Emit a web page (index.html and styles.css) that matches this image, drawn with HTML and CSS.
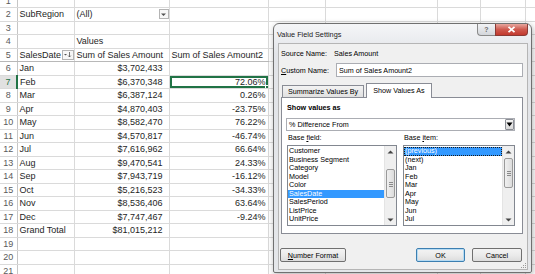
FILE: index.html
```html
<!DOCTYPE html>
<html lang="en">
<head>
    <meta charset="UTF-8">
    <title>Value Field Settings</title>
    <link rel="stylesheet" href="styles.css">
</head>
<body><div class="feuille">
    <table class="grille">
        <colgroup>
            <col class="c-num"><col class="c-a"><col class="c-b"><col class="c-c">
            <col class="c-d"><col class="c-e"><col class="c-f"><col class="c-g"><col class="c-h">
        </colgroup>
        <tr><td class="num">1</td><td></td><td></td><td></td><td></td><td></td><td></td><td></td><td></td></tr>
        <tr><td class="num">2</td><td>SubRegion</td>
            <td><div class="filtre-page"><span>(All)</span><span class="bouton-filtre"><svg width="7" height="7" viewBox="0 0 7 7"><path d="M1 2.5 L6 2.5 L3.5 5 Z" fill="#505050"/></svg></span></div></td>
            <td></td><td></td><td></td><td></td><td></td><td></td></tr>
        <tr><td class="num">3</td><td></td><td></td><td></td><td></td><td></td><td></td><td></td><td></td></tr>
        <tr><td class="num">4</td><td></td><td>Values</td><td></td><td></td><td></td><td></td><td></td><td></td></tr>
        <tr class="entete-pivot"><td class="num">5</td>
            <td><div class="filtre-page"><span>SalesDate</span><span class="bouton-tri"><svg width="9" height="7" viewBox="0 0 9 7"><path d="M1 3 L4 3 L2.5 4.6 Z" fill="#505050"/><path d="M6.5 1 L6.5 6 M5.2 4.6 L6.5 6 L7.8 4.6" stroke="#505050" stroke-width="0.8" fill="none"/></svg></span></div></td>
            <td>Sum of Sales Amount</td><td>Sum of Sales Amount2</td><td></td><td></td><td></td><td></td><td></td></tr>
        <tr><td class="num">6</td><td>Jan</td><td class="montant">$3,702,433</td><td class="pct"></td><td></td><td></td><td></td><td></td><td></td></tr>
        <tr><td class="num actif">7</td><td>Feb</td><td class="montant">$6,370,348</td><td class="pct selection">72.06%</td><td></td><td></td><td></td><td></td><td></td></tr>
        <tr><td class="num">8</td><td>Mar</td><td class="montant">$6,387,124</td><td class="pct">0.26%</td><td></td><td></td><td></td><td></td><td></td></tr>
        <tr><td class="num">9</td><td>Apr</td><td class="montant">$4,870,403</td><td class="pct">-23.75%</td><td></td><td></td><td></td><td></td><td></td></tr>
        <tr><td class="num">10</td><td>May</td><td class="montant">$8,582,470</td><td class="pct">76.22%</td><td></td><td></td><td></td><td></td><td></td></tr>
        <tr><td class="num">11</td><td>Jun</td><td class="montant">$4,570,817</td><td class="pct">-46.74%</td><td></td><td></td><td></td><td></td><td></td></tr>
        <tr><td class="num">12</td><td>Jul</td><td class="montant">$7,616,962</td><td class="pct">66.64%</td><td></td><td></td><td></td><td></td><td></td></tr>
        <tr><td class="num">13</td><td>Aug</td><td class="montant">$9,470,541</td><td class="pct">24.33%</td><td></td><td></td><td></td><td></td><td></td></tr>
        <tr><td class="num">14</td><td>Sep</td><td class="montant">$7,943,719</td><td class="pct">-16.12%</td><td></td><td></td><td></td><td></td><td></td></tr>
        <tr><td class="num">15</td><td>Oct</td><td class="montant">$5,216,523</td><td class="pct">-34.33%</td><td></td><td></td><td></td><td></td><td></td></tr>
        <tr><td class="num">16</td><td>Nov</td><td class="montant">$8,536,406</td><td class="pct">63.64%</td><td></td><td></td><td></td><td></td><td></td></tr>
        <tr><td class="num">17</td><td>Dec</td><td class="montant">$7,747,467</td><td class="pct">-9.24%</td><td></td><td></td><td></td><td></td><td></td></tr>
        <tr class="total-pivot"><td class="num">18</td><td>Grand Total</td><td class="montant">$81,015,212</td><td class="pct"></td><td></td><td></td><td></td><td></td><td></td></tr>
        <tr><td class="num">19</td><td></td><td></td><td></td><td></td><td></td><td></td><td></td><td></td></tr>
        <tr><td class="num">20</td><td></td><td></td><td></td><td></td><td></td><td></td><td></td><td></td></tr>
        <tr><td class="num">21</td><td></td><td></td><td></td><td></td><td></td><td></td><td></td><td></td></tr>
    </table>

    <!-- Boite de dialogue -->
    <div class="fenetre">
        <div class="barre-titre">
            <span class="titre-fenetre">Value Field Settings</span>
            <div class="boutons-titre">
                <span class="btn-aide">?</span>
                <span class="btn-fermer"><svg width="9" height="7" viewBox="0 0 9 7"><path d="M1.5 0.8 L7.5 6.2 M7.5 0.8 L1.5 6.2" stroke="#fff" stroke-width="1.8"/></svg></span>
            </div>
        </div>
        <div class="client">
            <div class="ligne-source"><span class="lbl-source">Source Name:</span><span>Sales Amount</span></div>
            <div class="ligne-nom">
                <label for="nomPerso"><u>C</u>ustom Name:</label>
                <input type="text" id="nomPerso" class="champ-nom" value="Sum of Sales Amount2">
            </div>
            <div class="onglets">
                <span class="onglet">Summarize Values By</span>
                <span class="onglet actif">Show Values As</span>
            </div>
            <div class="panneau">
                <div class="titre-section">Show values as</div>
                <div class="liste-deroulante">
                    <span>% Difference From</span>
                    <span class="fleche-deroulante"><svg width="7" height="5" viewBox="0 0 7 5"><path d="M0.5 0.5 L6.5 0.5 L3.5 4.5 Z" fill="#000"/></svg></span>
                </div>
                <div class="colonnes-base">
                    <div class="col-base gauche">
                        <div class="lbl-base">Base <u>f</u>ield:</div>
                        <div class="listbox">
                            <div class="elements">
                                <div>Customer</div>
                                <div>Business Segment</div>
                                <div>Category</div>
                                <div>Model</div>
                                <div>Color</div>
                                <div class="choisi">SalesDate</div>
                                <div>SalesPeriod</div>
                                <div>ListPrice</div>
                                <div>UnitPrice</div>
                            </div>
                            <div class="defilement">
                                <span class="fleche-haut"><svg width="7" height="4" viewBox="0 0 7 4"><path d="M0.5 3.5 L6.5 3.5 L3.5 0.5 Z" fill="#444"/></svg></span>
                                <div class="piste"><div class="curseur bas"></div></div>
                                <span class="fleche-bas"><svg width="7" height="4" viewBox="0 0 7 4"><path d="M0.5 0.5 L6.5 0.5 L3.5 3.5 Z" fill="#444"/></svg></span>
                            </div>
                        </div>
                    </div>
                    <div class="col-base droite">
                        <div class="lbl-base">Base <u>i</u>tem:</div>
                        <div class="listbox">
                            <div class="elements">
                                <div class="choisi focus">(previous)</div>
                                <div>(next)</div>
                                <div>Jan</div>
                                <div>Feb</div>
                                <div>Mar</div>
                                <div>Apr</div>
                                <div>May</div>
                                <div>Jun</div>
                                <div>Jul</div>
                            </div>
                            <div class="defilement">
                                <span class="fleche-haut"><svg width="7" height="4" viewBox="0 0 7 4"><path d="M0.5 3.5 L6.5 3.5 L3.5 0.5 Z" fill="#444"/></svg></span>
                                <div class="piste"><div class="curseur"></div></div>
                                <span class="fleche-bas"><svg width="7" height="4" viewBox="0 0 7 4"><path d="M0.5 0.5 L6.5 0.5 L3.5 3.5 Z" fill="#444"/></svg></span>
                            </div>
                        </div>
                    </div>
                </div>
            </div>
            <div class="pied">
                <button class="bouton-dlg format"><u>N</u>umber Format</button>
                <div class="boutons-ok">
                    <button class="bouton-dlg defaut">OK</button>
                    <button class="bouton-dlg">Cancel</button>
                </div>
            </div>
            <svg class="poignee" width="6" height="6" viewBox="0 0 6 6">
                <rect x="4" y="0" width="1" height="1" fill="#999"/>
                <rect x="2" y="2" width="1" height="1" fill="#999"/><rect x="4" y="2" width="1" height="1" fill="#999"/>
                <rect x="0" y="4" width="1" height="1" fill="#999"/><rect x="2" y="4" width="1" height="1" fill="#999"/><rect x="4" y="4" width="1" height="1" fill="#999"/>
            </svg>
        </div>
    </div>
</div>
</body>
</html>
```

FILE: styles.css
```css
body {
    margin: 0;
    background: #ffffff;
    font-family: "Liberation Sans", Arial, sans-serif;
    overflow: hidden;
}

.feuille {
    position: relative;
    width: 535px;
    height: 274px;
    overflow: hidden;
}

/* Grille Excel */
.grille {
    border-collapse: collapse;
    table-layout: fixed;
    width: 555px;
    margin-top: -6px;
    font-size: 9px;
    color: #1e1e1e;
}
.c-num { width: 17px; }
.c-a { width: 57px; }
.c-b { width: 95px; }
.c-c { width: 99px; }
.c-d { width: 57px; }
.c-e { width: 112px; }
.c-f { width: 43px; }
.c-g { width: 45px; }
.c-h { width: 30px; }

.grille tr {
    height: 13.5px;
}
.grille td {
    padding: 0 0 0 2px;
    border-right: 1px solid #dadada;
    border-bottom: 1px solid #dadada;
    white-space: nowrap;
    overflow: hidden;
    line-height: 12px;
    vertical-align: middle;
}
.grille td.num {
    padding: 0;
    text-align: center;
    color: #5a5a5a;
    background: #ffffff;
    border-right: 1px solid #c6c6c6;
}
.grille td.num.actif {
    background: #e1e1e1;
    color: #217346;
    border-right: 2px solid #217346;
}
.grille td.montant {
    text-align: right;
    padding-right: 6px;
}
.grille td.pct {
    text-align: right;
    padding-right: 2px;
}
.grille td.selection {
    position: relative;
    box-shadow: inset 0 0 0 2px #217346;
}
.grille td.selection::after {
    content: "";
    position: absolute;
    right: -3px;
    bottom: -3px;
    width: 4px;
    height: 4px;
    background: #217346;
    border: 1px solid #ffffff;
}
.entete-pivot td:nth-child(-n+4) {
    border-bottom-color: #b8b8b8;
}
.total-pivot td:nth-child(-n+4) {
    border-top: 1px solid #b8b8b8;
}

.filtre-page {
    display: flex;
    justify-content: space-between;
    align-items: center;
}
.bouton-filtre {
    display: flex;
    align-items: center;
    justify-content: center;
    width: 8px;
    height: 8px;
    border: 1px solid #b4b4b4;
    background: #f7f7f7;
}
.bouton-tri {
    display: flex;
    align-items: center;
    justify-content: center;
    width: 10px;
    height: 8px;
    border: 1px solid #b4b4b4;
    background: #f7f7f7;
}

/* Fenetre de dialogue */
.fenetre {
    position: absolute;
    left: 273px;
    top: 23px;
    width: 259px;
    height: 250px;
    box-sizing: border-box;
    border: 1px solid #707070;
    border-radius: 6px 6px 2px 2px;
    background: linear-gradient(#f5f6f8, #e2e4e8 30px, #e4e6e9);
    box-shadow: 1px 2px 6px rgba(0, 0, 0, 0.3);
    padding: 0 3px 2px 4px;
    display: flex;
    flex-direction: column;
    font-family: "Liberation Sans", Arial, sans-serif;
    font-size: 7.2px;
    color: #000;
}
.barre-titre {
    height: 19px;
    display: flex;
    justify-content: space-between;
    flex-shrink: 0;
}
.titre-fenetre {
    padding-top: 6px;
    margin-left: -1px;
    font-size: 7.3px;
    color: #1a1a1a;
}
.boutons-titre {
    display: flex;
    align-self: flex-start;
}
.btn-aide {
    width: 18px;
    height: 12px;
    box-sizing: border-box;
    border: 1px solid #8a8a8a;
    border-top: none;
    border-right: none;
    border-radius: 0 0 0 4px;
    background: linear-gradient(#f2f3f5, #d3d6db);
    color: #6b6b6b;
    font-weight: bold;
    font-size: 7px;
    text-align: center;
    line-height: 11px;
}
.btn-fermer {
    width: 33px;
    height: 12px;
    box-sizing: border-box;
    border: 1px solid #8a3a35;
    border-top: none;
    border-radius: 0 0 4px 0;
    background: linear-gradient(#e7a79f, #cf5a4f 50%, #c2392e);
    display: flex;
    align-items: center;
    justify-content: center;
}
.client {
    flex: 1;
    position: relative;
    background: #f0f0f0;
    border: 1px solid #b5b5b5;
    padding: 0 4px 0 2px;
    display: flex;
    flex-direction: column;
}
.ligne-source {
    margin-top: 5px;
    height: 9px;
    line-height: 9px;
    display: flex;
}
.lbl-source {
    width: 53px;
}
.ligne-nom {
    margin-top: 5px;
    height: 14px;
    display: flex;
    align-items: center;
    justify-content: space-between;
}
.champ-nom {
    width: 187px;
    height: 14px;
    box-sizing: border-box;
    border: 1px solid #abadb3;
    padding: 0 2px;
    font-family: "Liberation Sans", Arial, sans-serif;
    font-size: 7.2px;
    color: #000;
    background: #fff;
}
.onglets {
    margin-top: 6px;
    margin-left: 1px;
    height: 14px;
    display: flex;
    align-items: flex-end;
    gap: 2px;
    position: relative;
    z-index: 1;
}
.onglet {
    height: 12px;
    box-sizing: border-box;
    padding: 0 5px;
    line-height: 11px;
    border: 1px solid #898c95;
    border-bottom: none;
    background: linear-gradient(#f3f3f3, #e0e0e0);
}
.onglet.actif {
    height: 15px;
    line-height: 14px;
    background: #ffffff;
    margin-bottom: -1px;
    padding: 0 6px;
}
.panneau {
    height: 137px;
    box-sizing: border-box;
    border: 1px solid #898c95;
    background: #ffffff;
    padding: 0 7px 0 5px;
}
.titre-section {
    margin-top: 5px;
    line-height: 10px;
    font-weight: bold;
}
.liste-deroulante {
    margin-top: 5px;
    margin-left: -1px;
    width: 229px;
    height: 13px;
    box-sizing: border-box;
    border: 1px solid #abadb3;
    display: flex;
    justify-content: space-between;
    align-items: center;
    padding-left: 2px;
}
.fleche-deroulante {
    width: 9px;
    height: 11px;
    box-sizing: border-box;
    border: 1px solid #8c8f96;
    border-radius: 1px;
    background: linear-gradient(#f4f4f4, #d8d8d8);
    display: flex;
    align-items: center;
    justify-content: center;
}
.colonnes-base {
    margin-top: 2px;
    display: flex;
    gap: 6px;
}
.col-base.gauche { width: 111px; }
.col-base.droite { width: 113px; }
.lbl-base {
    line-height: 10px;
    margin-left: 1px;
}
.listbox {
    margin-top: 2px;
    height: 81px;
    box-sizing: border-box;
    border: 1px solid #828790;
    background: #fff;
    display: flex;
}
.elements {
    flex: 1;
    padding-top: 1px;
    overflow: hidden;
}
.elements div {
    height: 8.5px;
    line-height: 8.5px;
    padding-left: 1px;
    white-space: nowrap;
}
.elements .choisi {
    background: #3399ff;
    color: #ffffff;
}
.elements .focus {
    outline: 1px dotted #1a1a1a;
    outline-offset: -1px;
}
.defilement {
    width: 11px;
    background: #efefef;
    border-left: 1px solid #e4e4e4;
    display: flex;
    flex-direction: column;
    align-items: center;
}
.fleche-haut, .fleche-bas {
    height: 11px;
    display: flex;
    align-items: center;
    justify-content: center;
}
.piste {
    flex: 1;
    width: 100%;
    display: flex;
    flex-direction: column;
    align-items: center;
}
.curseur {
    margin-top: 1px;
    width: 9px;
    height: 30px;
    box-sizing: border-box;
    border: 1px solid #9a9a9a;
    border-radius: 2px;
    background:
        linear-gradient(#8a8a8a, #8a8a8a) center 12px / 4px 1px no-repeat,
        linear-gradient(#8a8a8a, #8a8a8a) center 14px / 4px 1px no-repeat,
        linear-gradient(#8a8a8a, #8a8a8a) center 16px / 4px 1px no-repeat,
        linear-gradient(90deg, #f0f0f0, #dcdcdc);
}
.curseur.bas {
    margin-top: 12px;
    height: 29px;
}
.pied {
    margin-top: 14px;
    margin-left: -1px;
    margin-right: 1px;
    display: flex;
    justify-content: space-between;
}
.boutons-ok {
    display: flex;
    gap: 7px;
}
.bouton-dlg {
    height: 14px;
    width: 50px;
    box-sizing: border-box;
    border: 1px solid #707070;
    border-radius: 2px;
    background: linear-gradient(#f3f3f3, #ebebeb 50%, #dcdcdc);
    font-family: "Liberation Sans", Arial, sans-serif;
    font-size: 7.2px;
    color: #000;
    padding: 0;
}
.bouton-dlg.format {
    width: 66px;
}
.bouton-dlg.defaut {
    width: 49px;
    border-color: #3c7fb1;
    box-shadow: inset 0 0 0 1px #b6dbf3;
}
.poignee {
    position: absolute;
    right: 0;
    bottom: 0;
}
```
